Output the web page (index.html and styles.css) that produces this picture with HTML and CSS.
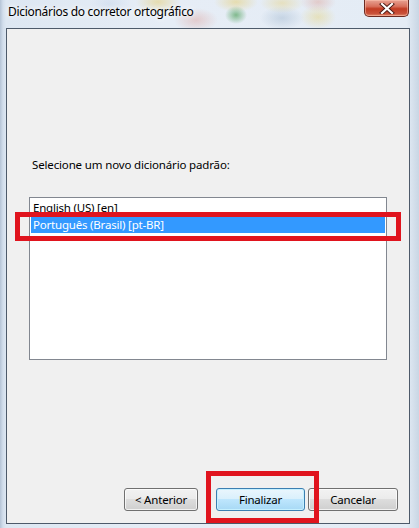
FILE: index.html
```html
<!DOCTYPE html>
<html>
<head>
<meta charset="utf-8">
<link rel="stylesheet" href="styles.css">
</head>
<body>
<div class="window">
  <div class="titlebar">
    <span class="title">Dicionários do corretor ortográfico</span>
    <div class="close">
      <svg width="16" height="11" viewBox="0 0 16 11">
        <path d="M3 1 L13 10 M13 1 L3 10" stroke="#4a1a14" stroke-width="4" stroke-linecap="square" fill="none"/>
        <path d="M3 1 L13 10 M13 1 L3 10" stroke="#ffffff" stroke-width="2.2" stroke-linecap="square" fill="none"/>
      </svg>
    </div>
  </div>
  <div class="content">
    <div class="label">Selecione um novo dicionário padrão:</div>
    <div class="listbox">
      <div class="item">English (US) [en]</div>
      <div class="item selected">Português (Brasil) [pt-BR]</div>
    </div>
    <div class="spacer"></div>
    <div class="buttons">
      <button class="btn anterior">&lt; Anterior</button>
      <button class="btn default finalizar">Finalizar</button>
      <button class="btn cancelar">Cancelar</button>
    </div>
  </div>
  <div class="mark mark-list"></div>
  <div class="mark mark-btn"></div>
</div>
</body>
</html>
```
FILE: styles.css
```css
html, body {
  margin: 0;
  padding: 0;
}
body {
  width: 419px;
  height: 528px;
  overflow: hidden;
  font-family: "Noto Sans", "Open Sans", sans-serif;
  font-size: 12px;
  color: #000;
}
.window {
  position: relative;
  width: 419px;
  height: 528px;
  box-sizing: border-box;
  display: flex;
  flex-direction: column;
  padding: 0 9px 4px 6px;
  background:
    radial-gradient(ellipse 22px 12px at 158px 2px, rgba(230, 200, 90, 0.45), transparent),
    radial-gradient(ellipse 22px 12px at 196px 20px, rgba(220, 140, 130, 0.35), transparent),
    radial-gradient(ellipse 11px 9px at 236px 15px, rgba(60, 150, 70, 0.6), transparent),
    radial-gradient(ellipse 22px 10px at 236px 2px, rgba(230, 200, 90, 0.45), transparent),
    radial-gradient(ellipse 22px 10px at 282px 3px, rgba(230, 200, 90, 0.35), transparent),
    radial-gradient(ellipse 22px 12px at 282px 18px, rgba(150, 175, 200, 0.4), transparent),
    radial-gradient(ellipse 18px 12px at 318px 17px, rgba(230, 210, 120, 0.45), transparent),
    radial-gradient(ellipse 18px 10px at 318px 2px, rgba(220, 140, 120, 0.35), transparent),
    radial-gradient(ellipse 20px 12px at 110px 4px, rgba(200, 215, 235, 0.5), transparent),
    linear-gradient(to right, #b5c4d6 0px, #d2deec 3px, #dde7f2 6px, #e6edf6 40%, #e4ecf5 97%, #c9d6e4 100%);
}
.titlebar {
  height: 28px;
  display: flex;
  align-items: flex-start;
  justify-content: space-between;
  flex: none;
}
.title {
  margin-left: 2px;
  margin-top: 4px;
  line-height: 16px;
  font-size: 12px;
  letter-spacing: -0.3px;
  color: #000;
  text-shadow: 0 0 8px #fff, 0 0 4px #fff;
}
.close {
  width: 45px;
  height: 17px;
  margin-right: 1px;
  border: 1px solid #6b2a22;
  border-top: none;
  border-radius: 0 0 5px 5px;
  background: linear-gradient(to bottom, #e8a293 0%, #d8705c 40%, #c23c23 55%, #c9523b 85%, #e28b6e 100%);
  box-shadow: inset 0 0 0 1px rgba(255, 200, 180, 0.5);
  display: flex;
  align-items: center;
  justify-content: center;
  box-sizing: border-box;
}
.content {
  flex: 1;
  display: flex;
  flex-direction: column;
  border: 1px solid #4d5a6a;
  background: #f0f0f0;
  padding: 128px 0 12px 22px;
  box-sizing: border-box;
}
.label {
  margin-left: 3px;
  line-height: 15px;
  font-size: 11.5px;
  letter-spacing: -0.15px;
}
.listbox {
  margin-top: 25px;
  width: 358px;
  height: 163px;
  box-sizing: border-box;
  border: 1px solid #828790;
  background: #fff;
  padding: 1px;
}
.item {
  height: 17px;
  line-height: 17px;
  padding-left: 2px;
  font-size: 11.5px;
  letter-spacing: -0.2px;
}
.selected {
  background: #3399ff;
  color: #fff;
}
.spacer {
  flex: 1;
}
.buttons {
  display: flex;
  padding-left: 95px;
}
.btn {
  height: 23px;
  box-sizing: border-box;
  border: 1px solid #707070;
  border-radius: 3px;
  background: linear-gradient(to bottom, #f2f2f2 0%, #ebebeb 49%, #dddddd 50%, #cfcfcf 100%);
  box-shadow: inset 0 0 0 1px rgba(255, 255, 255, 0.7);
  font-family: "Noto Sans", "Open Sans", sans-serif;
  font-size: 11.5px;
  letter-spacing: -0.2px;
  color: #000;
  padding: 0;
}
.anterior {
  width: 74px;
}
.finalizar {
  width: 89px;
  margin-left: 18px;
}
.cancelar {
  width: 90px;
  margin-left: 3px;
}
.default {
  border-color: #3c7fb1;
  background: linear-gradient(to bottom, #eaf6fd 0%, #d9f0fc 49%, #bee6fd 50%, #a7d9f5 100%);
  box-shadow: inset 0 0 0 1px #c5f0ff;
}
.mark {
  position: absolute;
  border: 5px solid #e0141e;
  box-sizing: border-box;
}
.mark-list {
  left: 15px;
  top: 212px;
  width: 386px;
  height: 29px;
}
.mark-btn {
  left: 206px;
  top: 471px;
  width: 113px;
  height: 52px;
}
```
